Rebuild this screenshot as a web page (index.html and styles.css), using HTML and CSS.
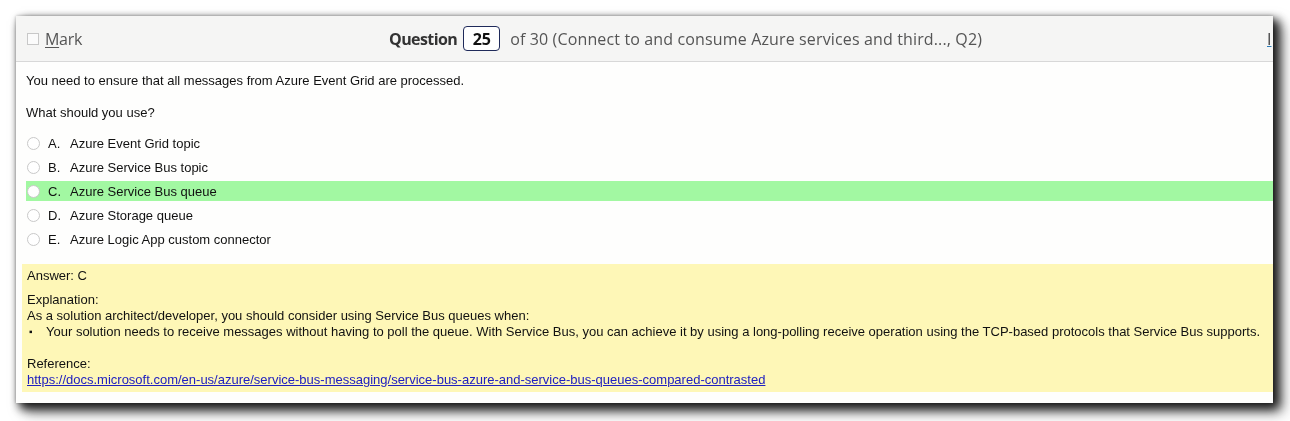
FILE: index.html
```html
<!DOCTYPE html>
<html lang="en">
<head>
<meta charset="utf-8">
<title>Question 25</title>
<link rel="stylesheet" href="styles.css">
</head>
<body>
<div class="card">
  <div class="hdr">
    <label class="mark"><span class="chk"></span><span><u>M</u>ark</span></label>
    <div class="qnav">
      <span class="qlabel">Question</span>
      <span class="qbox">25</span>
      <span class="qof">of 30 (Connect to and consume Azure services and third..., Q2)</span>
    </div>
    <div class="hdr-right"><a class="hlink" href="#">I</a></div>
  </div>
  <div class="body">
    <div class="question">
      <p class="stem">You need to ensure that all messages from Azure Event Grid are processed.</p>
      <p class="stem">What should you use?</p>
      <ul class="opts">
        <li class="opt"><span class="radio"></span><span class="let">A.</span><span>Azure Event Grid topic</span></li>
        <li class="opt"><span class="radio"></span><span class="let">B.</span><span>Azure Service Bus topic</span></li>
        <li class="opt correct"><span class="radio"></span><span class="let">C.</span><span>Azure Service Bus queue</span></li>
        <li class="opt"><span class="radio"></span><span class="let">D.</span><span>Azure Storage queue</span></li>
        <li class="opt"><span class="radio"></span><span class="let">E.</span><span>Azure Logic App custom connector</span></li>
      </ul>
    </div>
    <div class="answer">
      <p class="ans">Answer: C</p>
      <p>Explanation:</p>
      <p>As a solution architect/developer, you should consider using Service Bus queues when:</p>
      <div class="bullet"><span class="bmark">&#9642;</span><span>Your solution needs to receive messages without having to poll the queue. With Service Bus, you can achieve it by using a long-polling receive operation using the TCP-based protocols that Service Bus supports.</span></div>
      <p class="gap">Reference:</p>
      <p><a class="ref" href="#">https://docs.microsoft.com/en-us/azure/service-bus-messaging/service-bus-azure-and-service-bus-queues-compared-contrasted</a></p>
    </div>
  </div>
</div>
</body>
</html>
```

FILE: styles.css
```css
* { box-sizing: border-box; }
html, body { margin: 0; padding: 0; background: #ffffff; }
body { padding: 16px 0 0 16px; height: 421px; }

.card {
  width: 1257px;
  height: 387px;
  background: #fefefd;
  overflow: hidden;
  box-shadow: 5px 5px 10px rgba(0, 0, 0, 0.8), 0 0 3px rgba(0, 0, 0, 0.25);
  filter: drop-shadow(4px 4px 5px rgba(0, 0, 0, 0.6));
  font-family: "Liberation Sans", Arial, sans-serif;
  font-size: 13px;
  color: #111;
}

.hdr {
  height: 46px;
  background: #f5f5f4;
  border-bottom: 1px solid #d8d8d8;
  display: flex;
  align-items: center;
  padding-left: 11px;
  font-family: "Open Sans", "Noto Sans", sans-serif;
  font-size: 16px;
  color: #555;
}
.mark { display: flex; align-items: center; gap: 6px; letter-spacing: -0.3px; }
.chk {
  width: 12px; height: 12px;
  border: 1px solid #c8c8c8;
  background: #fbfbfb;
}
.mark u { text-decoration-thickness: 1px; text-underline-offset: 2px; }

.qnav { display: flex; align-items: center; margin-left: 307px; }
.qlabel { font-weight: bold; color: #333; letter-spacing: -0.6px; }
.qbox {
  margin-left: 6px;
  width: 37px; height: 25px;
  border: 1px solid #1f2a5a;
  border-radius: 4px;
  background: #fff;
  color: #111;
  font-weight: bold;
  letter-spacing: -0.3px;
  display: flex; align-items: center; justify-content: center;
}
.qof { margin-left: 10px; letter-spacing: 0.14px; }

.hdr-right { margin-left: auto; width: 6px; overflow: hidden; }
.hlink { color: #444; text-decoration-color: #2c7cb8; white-space: nowrap; }

.body { padding: 11px 0 0 6px; }
p { margin: 0; line-height: 16px; }
.question { padding-left: 4px; }
.stem + .stem { margin-top: 16px; }

.opts { list-style: none; margin: 12px 0 0 0; padding: 0; display: flex; flex-direction: column; gap: 4px; }
.opt { height: 20px; display: flex; align-items: center; padding-left: 1px; }
.opt.correct { background: #a2f8a2; }
.radio {
  width: 13px; height: 13px;
  border: 1px solid #c9c9c9;
  border-radius: 50%;
  background: #fff;
  margin-right: 8px;
}
.let { width: 22px; }

.answer {
  margin-top: 15px;
  background: #fef7b7;
  padding: 4px 0 4px 5px;
  height: 128px;
}
.ans { margin-bottom: 8px; }
.bullet { display: flex; line-height: 16px; }
.bmark { width: 19px; padding-left: 2px; font-size: 10px; }
.gap { margin-top: 16px; }
.ref { color: #2020c0; }
```
